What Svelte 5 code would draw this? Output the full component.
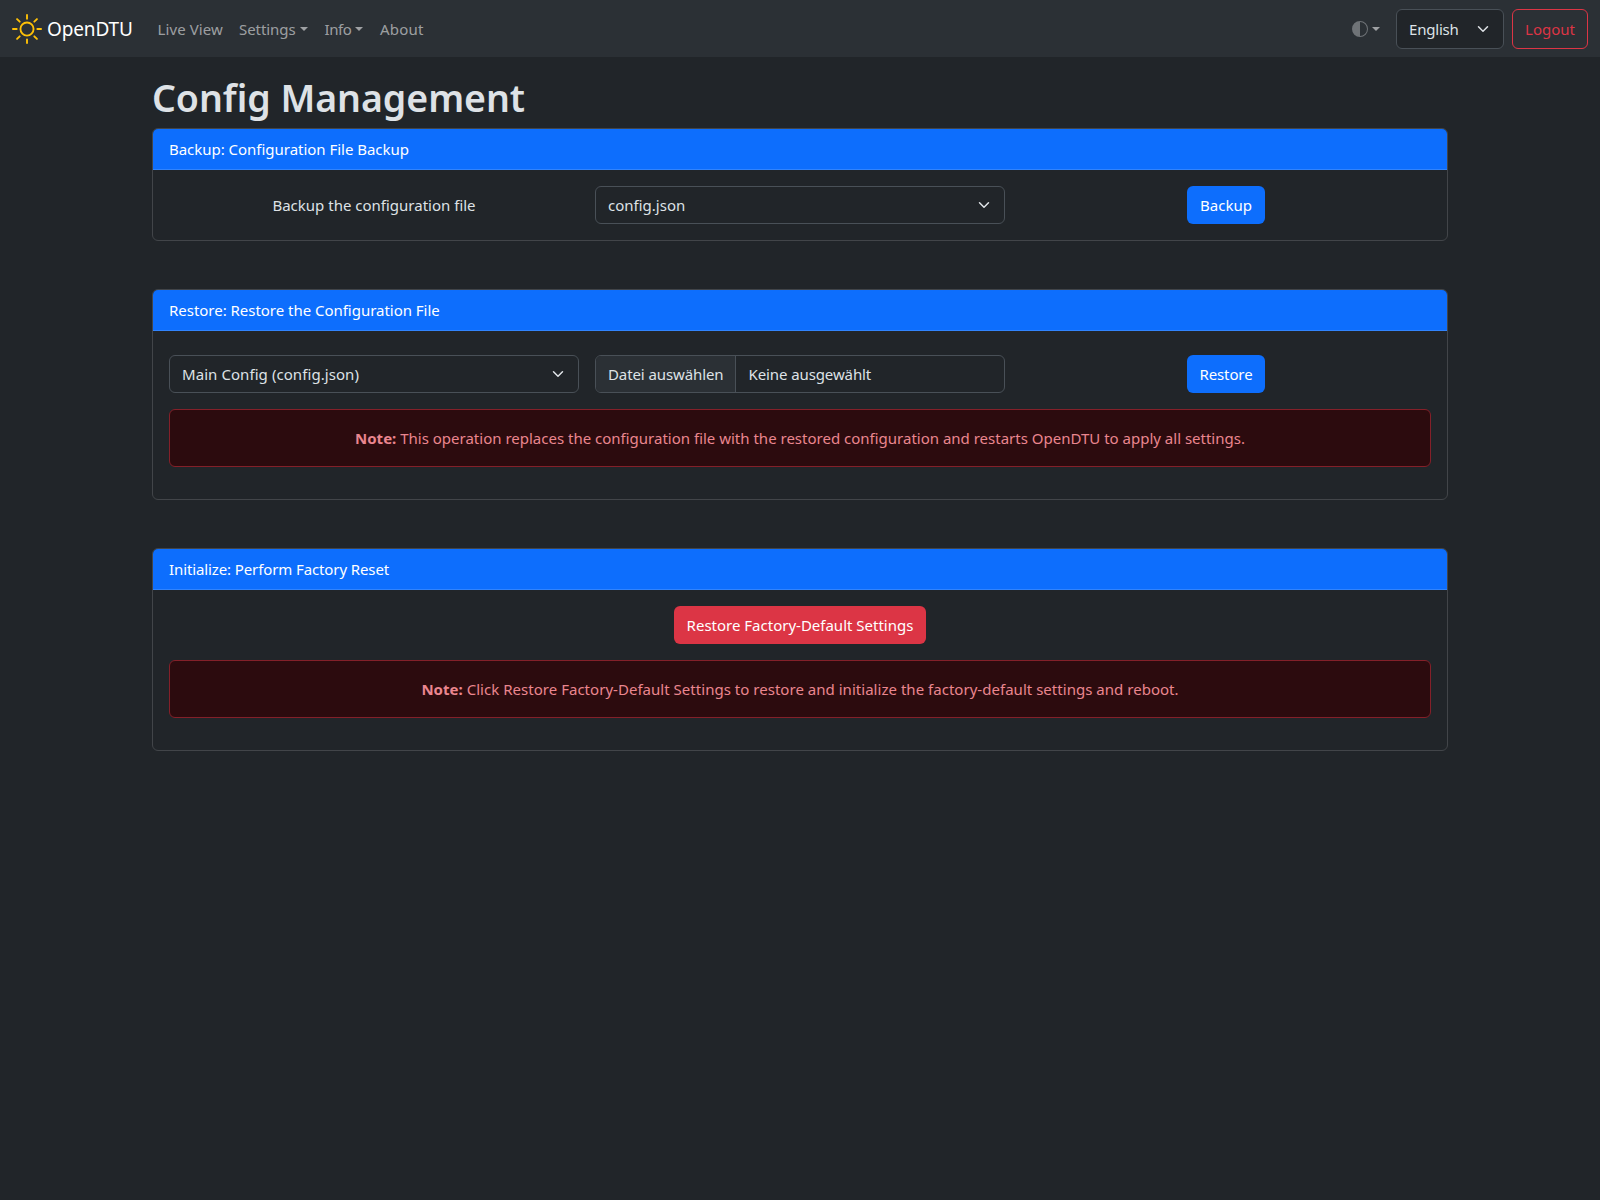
<script>
  const cards = {
    backup: 'Backup: Configuration File Backup',
    restore: 'Restore: Restore the Configuration File',
    init: 'Initialize: Perform Factory Reset'
  };
</script>

{#snippet chevron()}
  <svg class="chevron" width="16" height="12" viewBox="0 0 16 16">
    <path fill="none" stroke="#dee2e6" stroke-linecap="round" stroke-linejoin="round" stroke-width="2" d="m2 5 6 6 6-6" />
  </svg>
{/snippet}

<nav class="navbar">
  <a class="brand" href="#home">
    <svg width="30" height="30" viewBox="0 0 16 16" fill="#ffc107">
      <path d="M8 11a3 3 0 1 1 0-6 3 3 0 0 1 0 6m0 1a4 4 0 1 0 0-8 4 4 0 0 0 0 8M8 0a.5.5 0 0 1 .5.5v2a.5.5 0 0 1-1 0v-2A.5.5 0 0 1 8 0m0 13a.5.5 0 0 1 .5.5v2a.5.5 0 0 1-1 0v-2A.5.5 0 0 1 8 13m8-5a.5.5 0 0 1-.5.5h-2a.5.5 0 0 1 0-1h2a.5.5 0 0 1 .5.5M3 8a.5.5 0 0 1-.5.5h-2a.5.5 0 0 1 0-1h2A.5.5 0 0 1 3 8m10.657-5.657a.5.5 0 0 1 0 .707l-1.414 1.415a.5.5 0 1 1-.707-.708l1.414-1.414a.5.5 0 0 1 .707 0m-9.193 9.193a.5.5 0 0 1 0 .707L3.05 13.657a.5.5 0 0 1-.707-.707l1.414-1.414a.5.5 0 0 1 .707 0m9.193 2.121a.5.5 0 0 1-.707 0l-1.414-1.414a.5.5 0 0 1 .707-.707l1.414 1.414a.5.5 0 0 1 0 .707M4.464 4.465a.5.5 0 0 1-.707 0L2.343 3.05a.5.5 0 1 1 .707-.707l1.414 1.414a.5.5 0 0 1 0 .708" />
    </svg>
    <span>OpenDTU</span>
  </a>
  <a class="link live" href="#live">Live View</a>
  <a class="link settings" href="#settings">Settings<i class="caret"></i></a>
  <a class="link info" href="#info"><span>Info</span><i class="caret"></i></a>
  <a class="link about" href="#about">About</a>
  <div class="tools">
    <div class="theme">
      <svg width="16" height="16" viewBox="0 0 16 16">
        <path d="M8 15A7 7 0 1 0 8 1zm0 1A8 8 0 1 1 8 0a8 8 0 0 1 0 16" />
      </svg>
      <i class="caret"></i>
    </div>
    <div class="select language"><span>English</span>{@render chevron()}</div>
    <button class="btn logout">Logout</button>
  </div>
</nav>

<main>
  <h1>Config Management</h1>

  <section class="card">
    <header>{cards.backup}</header>
    <div class="body">
      <div class="row">
        <div class="center">Backup the configuration file</div>
        <div class="select"><span>config.json</span>{@render chevron()}</div>
        <div class="center"><button class="btn primary">Backup</button></div>
      </div>
    </div>
  </section>

  <section class="card">
    <header>{cards.restore}</header>
    <div class="body">
      <div class="row spaced">
        <div class="select"><span class="main-config">Main Config (config.json)</span>{@render chevron()}</div>
        <div class="file">
          <span class="choose">Datei auswählen</span>
          <span class="chosen">Keine ausgewählt</span>
        </div>
        <div class="center"><button class="btn primary restore">Restore</button></div>
      </div>
      <div class="alert"><p><b>Note:</b> This operation replaces the configuration file with the restored configuration and restarts OpenDTU to apply all settings.</p></div>
    </div>
  </section>

  <section class="card">
    <header class="tight">{cards.init}</header>
    <div class="body">
      <div class="center"><button class="btn danger">Restore Factory-Default Settings</button></div>
      <div class="alert wide"><p><b>Note:</b> Click Restore Factory-Default Settings to restore and initialize the factory-default settings and reboot.</p></div>
    </div>
  </section>
</main>

<style>
  :global(body) {
    background: #212529;
    color: #dee2e6;
    font: 400 15px/24px 'Noto Sans', 'Open Sans', sans-serif;
  }
  * { box-sizing: border-box; }
  .navbar {
    display: flex;
    align-items: center;
    height: 57px;
    padding: 0 12px;
    background: #2b3035;
  }
  a { text-decoration: none; white-space: nowrap; }
  .brand {
    display: flex;
    align-items: center;
    gap: 5px;
    width: 137.5px;
    color: #fff;
    font-size: 19px;
    letter-spacing: -0.15px;
  }
  .link {
    display: flex;
    align-items: center;
    padding: 8px;
    color: rgba(255, 255, 255, 0.55);
  }
  .live { width: 81.5px; letter-spacing: 0.1px; }
  .settings { width: 85.5px; letter-spacing: -0.07px; }
  .info { width: 55.5px; }
  .info span { letter-spacing: -0.45px; }
  .about { width: 60px; letter-spacing: 0.18px; }
  .caret {
    width: 0;
    height: 0;
    margin-left: 4px;
    border: solid transparent;
    border-width: 4.8px 4.8px 0;
    border-top-color: currentColor;
  }
  .tools { display: flex; align-items: center; margin-left: auto; }
  .theme {
    display: flex;
    align-items: center;
    margin-right: 16px;
    color: rgba(255, 255, 255, 0.55);
  }
  .theme svg { fill: #6f7377; }
  .select {
    display: flex;
    align-items: center;
    justify-content: space-between;
    height: 38px;
    padding: 0 12px;
    border: 1px solid #495057;
    border-radius: 6px;
    background: #212529;
  }
  .chevron { flex: none; }
  .language { width: 108px; height: 40px; margin-right: 8px; letter-spacing: -0.2px; }
  .btn {
    height: 38px;
    padding: 0;
    border: 1px solid transparent;
    border-radius: 6px;
    color: #fff;
    font: inherit;
    text-align: center;
    white-space: nowrap;
  }
  .logout { width: 76px; height: 40px; border-color: #dc3545; background: none; color: #dc3545; }
  .primary { width: 78px; background: #0d6efd; }
  .restore { letter-spacing: -0.12px; }
  .danger { width: 252px; background: #dc3545; }
  main { width: 1296px; margin: 0 auto; padding-top: 17px; }
  h1 {
    margin: 0 0 6px;
    font-size: 37.5px;
    font-weight: 600;
    line-height: 48px;
    letter-spacing: -0.05px;
  }
  .card {
    margin-bottom: 48px;
    border: 1px solid #424549;
    border-radius: 6px;
    overflow: hidden;
  }
  header {
    height: 41px;
    padding: 8px 16px;
    border-bottom: 1px solid #3184fd;
    background: #0d6efd;
    color: #fff;
    letter-spacing: -0.025px;
  }
  .tight { letter-spacing: -0.11px; }
  .body { padding: 16px; }
  .row {
    display: grid;
    grid-template-columns: repeat(3, 1fr);
    gap: 16px;
    align-items: center;
  }
  .spaced { margin-top: 8px; }
  .center { display: flex; justify-content: center; }
  .main-config { letter-spacing: 0.07px; }
  .file {
    display: flex;
    height: 38px;
    border: 1px solid #495057;
    border-radius: 6px;
    overflow: hidden;
    line-height: 36px;
    letter-spacing: -0.1px;
  }
  .choose {
    width: 140px;
    padding-left: 12px;
    border-right: 1px solid #495057;
    background: #2b3035;
  }
  .chosen { padding-left: 12.5px; }
  .alert {
    margin: 16px 0;
    padding: 16px;
    border: 1px solid #842029;
    border-radius: 6px;
    background: #2c0b0e;
    color: #ea868f;
    text-align: center;
  }
  .alert p { margin: 0; }
  .wide { letter-spacing: 0.028px; }
</style>
